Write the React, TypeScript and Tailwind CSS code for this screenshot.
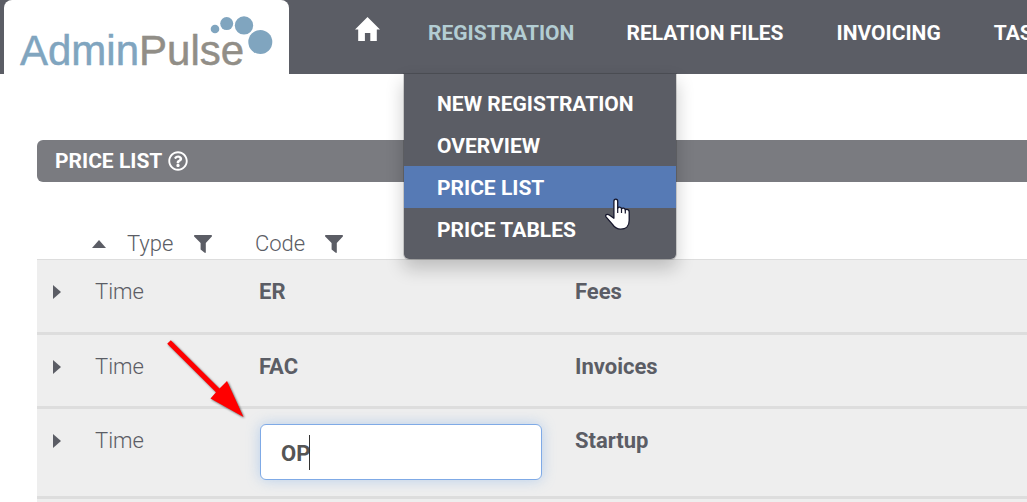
import { useState } from "react";
import { FaRegQuestionCircle } from "react-icons/fa";

const menuItems = ["NEW REGISTRATION", "OVERVIEW", "PRICE LIST", "PRICE TABLES"];

const rows = [
  { type: "Time", code: "ER", description: "Fees", editing: false },
  { type: "Time", code: "FAC", description: "Invoices", editing: false },
  { type: "Time", code: "OP", description: "Startup", editing: true },
  { type: "", code: "", description: "", editing: false },
];

function Logo() {
  return (
    <a
      href="#home"
      aria-label="AdminPulse"
      className="ml-1 block h-[74px] w-[285px] shrink-0 rounded-t-lg bg-white font-normal"
    >
      <svg viewBox="0 0 285 74" className="block h-full w-full" aria-hidden="true">
        <text
          x="16"
          y="65"
          fontFamily="Liberation Sans, Arial, sans-serif"
          fontSize="42"
          fill="#80a5bf"
          stroke="#80a5bf"
          strokeWidth="0.5"
        >
          Admin
          <tspan fill="#918e87" stroke="#918e87">
            Pulse
          </tspan>
        </text>
        <g fill="#80a5bf">
          <circle cx="211" cy="29" r="4.3" />
          <circle cx="222.7" cy="23.6" r="6.5" />
          <circle cx="240" cy="25.4" r="9.2" />
          <circle cx="256.3" cy="42" r="12" />
        </g>
      </svg>
    </a>
  );
}

function HomeIcon() {
  return (
    <svg viewBox="0 0 25 24" className="h-6 w-[25px]" fill="currentColor" aria-hidden="true">
      <path d="M12.5 0 25 12.6H21.8V24H15.3V16H9.9V24H3.2V12.6H0Z" />
    </svg>
  );
}

function FilterIcon() {
  return (
    <svg viewBox="0 0 18 18" className="h-[18px] w-[18px]" fill="currentColor" aria-hidden="true">
      <path d="M.5 0H17.5Q18.4.9 17.6 1.8L11.8 8V17.5Q11.4 18.2 10.7 17.8L6.6 14.4V8L.4 1.8Q-.4.9.5 0Z" />
    </svg>
  );
}

function HandCursor() {
  return (
    <svg
      viewBox="0 0 25 32"
      className="pointer-events-none absolute top-8 left-[201px] z-10 h-8 w-[25px]"
      aria-hidden="true"
    >
      <path
        d="M8.9 19.8V3.2C8.9.3 12.7.3 12.7 3.2V10.3C13.2 8.7 16.3 8.8 16.5 10.9C17.3 9.5 20.1 10 20.3 12C21.7 10.9 24.2 11.5 24.2 14V22.5C24.2 28 20.6 31.2 15.7 31.2C11.5 31.2 9.4 29.2 7.3 26.1L1 18.8C-.2 16.9 2.2 15.6 4.3 17L8.9 20.2Z"
        fill="#fff"
        stroke="#15162c"
        strokeWidth="1.3"
        strokeLinejoin="round"
      />
      <path d="M12.7 9.8V15M16.5 10.6V15M20.3 11.8V15.6" stroke="#15162c" strokeWidth="1.2" />
    </svg>
  );
}

function PointerArrow() {
  return (
    <svg
      viewBox="0 0 82 82"
      className="pointer-events-none absolute top-[338px] left-[165px] z-10 h-[82px] w-[82px] drop-shadow-[1px_1px_1px_rgba(0,0,0,0.6)]"
      aria-hidden="true"
    >
      <path d="M2.2 5.7 5.8 2.2 54.5 50.5 62 43 78.5 79 45.5 60.5 51 54.3Z" fill="#f00" />
    </svg>
  );
}

function NavLink({ children }: { children: string }) {
  return (
    <a href="#nav" className="pr-[26px] pl-[27px] whitespace-nowrap">
      {children}
    </a>
  );
}

function Header() {
  return (
    <header className="relative flex h-[74px] bg-[#5b5d65] text-[21px] leading-8 font-bold text-white">
      <Logo />
      <nav className="flex min-w-0 flex-1 items-start pt-[17px] pl-[66px]">
        <a href="#home" aria-label="Home" className="mr-[23px]">
          <HomeIcon />
        </a>
        <div className="relative">
          <button type="button" aria-expanded="true" className="px-[25px] text-[#b3cdd3]">
            REGISTRATION
          </button>
          <ul className="absolute top-[56px] left-0 z-10 w-[274px] rounded-b-md border border-black/15 bg-[#5b5d65] bg-clip-padding pt-2 pb-[9px] leading-[30px] shadow-[0_9px_18px_rgba(0,0,0,0.2)]">
            {menuItems.map((item) => (
              <li key={item} className="relative">
                <a
                  href="#menu"
                  className={
                    item === "PRICE LIST"
                      ? "block bg-[#567ab5] pt-[7px] pb-[5px] pl-[33px]"
                      : "block pt-[7px] pb-[5px] pl-[33px]"
                  }
                >
                  {item}
                </a>
                {item === "PRICE LIST" && <HandCursor />}
              </li>
            ))}
          </ul>
        </div>
        <NavLink>RELATION FILES</NavLink>
        <NavLink>INVOICING</NavLink>
        <NavLink>TASKS</NavLink>
      </nav>
    </header>
  );
}

function CodeInput({ initial }: { initial: string }) {
  const [code, setCode] = useState(initial);
  return (
    <div className="relative ml-[5px] w-[282px]">
      <input
        aria-label="Code"
        value={code}
        onChange={(event) => setCode(event.target.value)}
        className="block h-14 w-full rounded-md border border-[#7faae6] bg-white px-5 pt-0.5 font-bold text-[#555] caret-transparent shadow-[0_0_14px_rgba(102,160,233,0.4)] outline-none"
      />
      <span className="absolute top-[11px] left-[49px] h-[35px] w-px bg-[#333]" />
    </div>
  );
}

export default function App() {
  return (
    <div className="relative h-screen overflow-hidden bg-white font-['Roboto',sans-serif] text-[22px] leading-[30px] text-[#5b5d65]">
      <Header />
      <main className="pt-[66px] pl-[37px]">
        <h1 className="flex h-[42px] items-center gap-1.5 rounded-l-md bg-[#7a7b80] pl-[18px] text-[21px] font-bold text-white">
          PRICE LIST
          <FaRegQuestionCircle className="h-5 w-5" aria-label="Help" />
        </h1>
        <table className="mt-[47px] w-full table-fixed border-separate border-spacing-0 text-left">
          <colgroup>
            <col className="w-[50px]" />
            <col className="w-[160px]" />
            <col className="w-[320px]" />
            <col />
          </colgroup>
          <thead>
            <tr>
              <th aria-label="Expand" className="border-b border-[#ddd]" />
              <th className="border-b border-[#ddd] p-0 pl-[5px] font-light">
                <div className="flex items-center">
                  <svg viewBox="0 0 14 8" className="h-2 w-3.5" fill="currentColor" aria-hidden="true">
                    <path d="M7 0 14 8H0Z" />
                  </svg>
                  <span className="ml-[21px] w-[67px]">Type</span>
                  <FilterIcon />
                </div>
              </th>
              <th className="border-b border-[#ddd] p-0 pl-2 font-light">
                <div className="flex items-center">
                  <span className="w-[70px]">Code</span>
                  <FilterIcon />
                </div>
              </th>
              <th aria-label="Description" className="border-b border-[#ddd]" />
            </tr>
          </thead>
          <tbody>
            {rows.map((row, index) => (
              <tr
                key={index}
                className="h-[74px] bg-[#eee] align-top first:h-[75px] [&>td]:border-b-3 [&>td]:border-[#ddd]"
              >
                <td className="pt-[17px] pl-4">
                  {row.type && (
                    <button type="button" aria-label="Expand row" className="flex h-[30px] items-center">
                      <svg viewBox="0 0 8 14" className="h-3.5 w-2" fill="currentColor" aria-hidden="true">
                        <path d="M0 0 8 7 0 14Z" />
                      </svg>
                    </button>
                  )}
                </td>
                <td className="pt-[17px] pl-2 font-light">{row.type}</td>
                {row.editing ? (
                  <td className="pt-[15px] pr-0 pb-4 pl-2">
                    <CodeInput initial={row.code} />
                  </td>
                ) : (
                  <td className="pt-[17px] pl-3 font-bold">{row.code}</td>
                )}
                <td className="pt-[17px] pl-2 font-bold">{row.description}</td>
              </tr>
            ))}
          </tbody>
        </table>
      </main>
      <PointerArrow />
    </div>
  );
}
